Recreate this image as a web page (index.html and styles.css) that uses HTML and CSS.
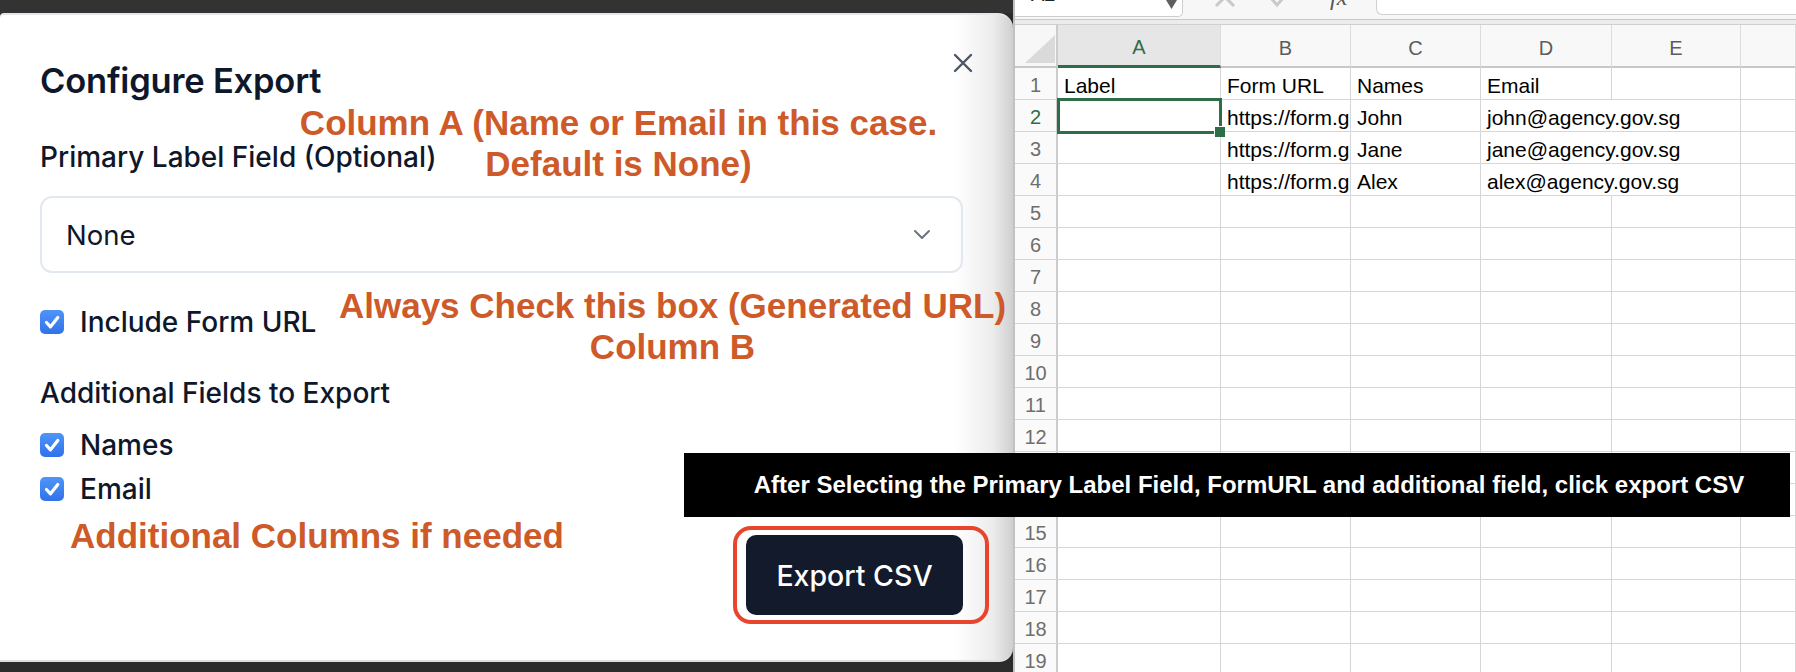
FILE: index.html
```html
<!DOCTYPE html>
<html lang="en">
<head>
<meta charset="utf-8">
<title>Configure Export</title>
<link rel="stylesheet" href="styles.css">
</head>
<body>
<div class="screen">
  <div class="left">
    <div class="modal">
      <button class="close" aria-label="Close">
        <svg width="20" height="20" viewBox="0 0 20 20"><path d="M2 2L18 18M18 2L2 18" stroke="#4b5563" stroke-width="2.4" stroke-linecap="round" fill="none"/></svg>
      </button>
      <h2 class="title">Configure Export</h2>
      <div class="field-label">Primary Label Field (Optional)</div>
      <div class="select">
        <span>None</span>
        <svg width="18" height="11" viewBox="0 0 18 11"><path d="M2 2L9 9L16 2" stroke="#6b7280" stroke-width="2" stroke-linecap="round" stroke-linejoin="round" fill="none"/></svg>
      </div>
      <label class="check check-url"><span class="cb"><svg width="24" height="24" viewBox="0 0 24 24"><path d="M6.5 12.5L10.5 16.8L17.8 7.5" stroke="#fff" stroke-width="3.2" stroke-linecap="round" stroke-linejoin="round" fill="none"/></svg></span>Include Form URL</label>
      <div class="section-label">Additional Fields to Export</div>
      <label class="check check-names"><span class="cb"><svg width="24" height="24" viewBox="0 0 24 24"><path d="M6.5 12.5L10.5 16.8L17.8 7.5" stroke="#fff" stroke-width="3.2" stroke-linecap="round" stroke-linejoin="round" fill="none"/></svg></span>Names</label>
      <label class="check check-email"><span class="cb"><svg width="24" height="24" viewBox="0 0 24 24"><path d="M6.5 12.5L10.5 16.8L17.8 7.5" stroke="#fff" stroke-width="3.2" stroke-linecap="round" stroke-linejoin="round" fill="none"/></svg></span>Email</label>
      <div class="footer"><button class="export">Export CSV</button></div>
    </div>
  </div>

  <div class="sheet">
    <div class="fbar">
      <div class="namebox"><span class="ref">A2</span>
        <svg class="tri" width="11" height="9" viewBox="0 0 11 9"><path d="M0 0H11L5.5 9Z" fill="#5f5f5f"/></svg>
      </div>
      <div class="fx-icons">
        <svg class="ic-x" width="24" height="20" viewBox="0 0 24 20"><path d="M3 1L21 19M21 1L3 19" stroke="#c9c9c9" stroke-width="3" fill="none"/></svg>
        <svg class="ic-ok" width="25" height="20" viewBox="0 0 25 20"><path d="M2 10L9 18L23 2" stroke="#c9c9c9" stroke-width="3" fill="none"/></svg>
        <span class="fx">fx</span>
      </div>
      <div class="finput"></div>
    </div>
    <div class="band"></div>
    <div class="grid">
      <div class="corner"><svg width="30" height="28" viewBox="0 0 30 28"><path d="M30 0V28H0Z" fill="#dadada"/></svg></div>
      <div class="hd hd-sel">A</div><div class="hd">B</div><div class="hd">C</div><div class="hd">D</div><div class="hd">E</div><div class="hd"></div>

      <div class="rn">1</div><div class="c">Label</div><div class="c">Form URL</div><div class="c">Names</div><div class="c">Email</div><div class="c"></div><div class="c"></div>
      <div class="rn rn-sel">2</div><div class="c c-sel"></div><div class="c">https://form.gov.sg/6a1b2c</div><div class="c">John</div><div class="c ov">john@agency.gov.sg</div><div class="c"></div><div class="c"></div>
      <div class="rn">3</div><div class="c"></div><div class="c">https://form.gov.sg/6a1b2d</div><div class="c">Jane</div><div class="c ov">jane@agency.gov.sg</div><div class="c"></div><div class="c"></div>
      <div class="rn">4</div><div class="c"></div><div class="c">https://form.gov.sg/6a1b2e</div><div class="c">Alex</div><div class="c ov">alex@agency.gov.sg</div><div class="c"></div><div class="c"></div>
      <div class="rn">5</div><div class="c"></div><div class="c"></div><div class="c"></div><div class="c"></div><div class="c"></div><div class="c"></div>
      <div class="rn">6</div><div class="c"></div><div class="c"></div><div class="c"></div><div class="c"></div><div class="c"></div><div class="c"></div>
      <div class="rn">7</div><div class="c"></div><div class="c"></div><div class="c"></div><div class="c"></div><div class="c"></div><div class="c"></div>
      <div class="rn">8</div><div class="c"></div><div class="c"></div><div class="c"></div><div class="c"></div><div class="c"></div><div class="c"></div>
      <div class="rn">9</div><div class="c"></div><div class="c"></div><div class="c"></div><div class="c"></div><div class="c"></div><div class="c"></div>
      <div class="rn">10</div><div class="c"></div><div class="c"></div><div class="c"></div><div class="c"></div><div class="c"></div><div class="c"></div>
      <div class="rn">11</div><div class="c"></div><div class="c"></div><div class="c"></div><div class="c"></div><div class="c"></div><div class="c"></div>
      <div class="rn">12</div><div class="c"></div><div class="c"></div><div class="c"></div><div class="c"></div><div class="c"></div><div class="c"></div>
      <div class="rn">13</div><div class="c"></div><div class="c"></div><div class="c"></div><div class="c"></div><div class="c"></div><div class="c"></div>
      <div class="rn">14</div><div class="c"></div><div class="c"></div><div class="c"></div><div class="c"></div><div class="c"></div><div class="c"></div>
      <div class="rn">15</div><div class="c"></div><div class="c"></div><div class="c"></div><div class="c"></div><div class="c"></div><div class="c"></div>
      <div class="rn">16</div><div class="c"></div><div class="c"></div><div class="c"></div><div class="c"></div><div class="c"></div><div class="c"></div>
      <div class="rn">17</div><div class="c"></div><div class="c"></div><div class="c"></div><div class="c"></div><div class="c"></div><div class="c"></div>
      <div class="rn">18</div><div class="c"></div><div class="c"></div><div class="c"></div><div class="c"></div><div class="c"></div><div class="c"></div>
      <div class="rn">19</div><div class="c"></div><div class="c"></div><div class="c"></div><div class="c"></div><div class="c"></div><div class="c"></div>
    </div>
  </div>

  <div class="note note-a">Column A (Name or Email in this case.<br>Default is None)</div>
  <div class="note note-b">Always Check this box (Generated URL)<br>Column B</div>
  <div class="note note-c">Additional Columns if needed</div>
  <div class="ring"></div>
  <div class="banner">After Selecting the Primary Label Field, FormURL and additional field, click export CSV</div>
</div>
</body>
</html>
```
FILE: styles.css
```css
* { box-sizing: border-box; }
html, body { margin: 0; padding: 0; }
body {
  width: 1796px;
  height: 672px;
  overflow: hidden;
  background: #2b2b2b;
  font-family: Inter, "Noto Sans", sans-serif;
}
.screen {
  position: relative;
  display: flex;
  width: 1796px;
  height: 672px;
  overflow: hidden;
}

/* ---------- modal ---------- */
.left {
  width: 1013px;
  flex: none;
  display: flex;
  flex-direction: column;
  padding: 13px 0 10px;
  background: linear-gradient(#333333 0, #333333 13px, #2b2b2b 13px);
}
.modal {
  flex: 1;
  position: relative;
  display: flex;
  flex-direction: column;
  padding: 46px 50px 0 40px;
  border-top: 2px solid #e3e6ea;
  border-bottom: 2px solid #dcdfe3;
  border-radius: 4px 15px 14px 0;
  background: linear-gradient(90deg, #ffffff 0, #ffffff 955px, #ececec 993px, #cfcfcf 1013px);
  color: #0f172a;
}
.close {
  position: absolute;
  top: 38px;
  right: 40px;
  width: 20px;
  height: 20px;
  padding: 0;
  border: 0;
  background: transparent;
  display: flex;
}
.title {
  margin: 0;
  font-size: 34.5px;
  line-height: 40px;
  font-weight: 600;
  letter-spacing: -0.2px;
}
.field-label,
.section-label {
  font-size: 28px;
  line-height: 36px;
  font-weight: 500;
}
.field-label { margin-top: 38px; }
.select {
  margin-top: 21px;
  height: 77px;
  border: 2px solid #e2e8f0;
  border-radius: 12px;
  padding: 0 30px 0 24px;
  display: flex;
  align-items: center;
  justify-content: space-between;
  font-size: 27.5px;
  font-weight: 400;
}
.check {
  height: 36px;
  display: flex;
  align-items: center;
  gap: 16px;
  font-size: 28px;
  line-height: 36px;
  font-weight: 500;
}
.check-url { margin-top: 31px; }
.section-label { margin-top: 35px; }
.check-names { margin-top: 16px; }
.check-email { margin-top: 8px; }
.cb {
  width: 24px;
  height: 24px;
  flex: none;
  border-radius: 5px;
  background: linear-gradient(#4f95f8, #2f72ea);
  display: flex;
}
.footer {
  margin-top: 28px;
  display: flex;
  justify-content: flex-end;
}
.export {
  width: 217px;
  height: 80px;
  border: 0;
  border-radius: 10px;
  background: #131a2b;
  color: #ffffff;
  font-family: Inter, "Noto Sans", sans-serif;
  font-size: 28.5px;
  font-weight: 500;
}

/* ---------- spreadsheet ---------- */
.sheet {
  flex: 1;
  min-width: 0;
  border-left: 2px solid #c2c2c2;
  background: #ffffff;
  overflow: hidden;
  display: flex;
  flex-direction: column;
  font-family: "Liberation Sans", Arial, sans-serif;
}
.fbar {
  flex: none;
  height: 46px;
  margin-top: -26px;
  display: flex;
  align-items: center;
  background: #f7f7f7;
  border-bottom: 1px solid #c9c9c9;
}
.namebox {
  align-self: flex-end;
  margin-bottom: 2px;
  width: 168px;
  height: 34px;
  background: #ffffff;
  border: 1px solid #cdcdcd;
  border-top: 0;
  border-left: 0;
  border-radius: 0 0 5px 0;
  display: flex;
  justify-content: space-between;
  align-items: flex-start;
  padding: 1px 5px 0 16px;
}
.ref {
  font-size: 20px;
  line-height: 20px;
  color: #222;
}
.tri { margin-top: 16px; }
.fx-icons {
  width: 193px;
  flex: none;
  display: flex;
  align-items: center;
  padding-left: 30px;
}
.ic-ok { margin-left: 31px; }
.fx {
  margin-left: 37px;
  font-family: "Liberation Serif", serif;
  font-style: italic;
  font-size: 24px;
  line-height: 20px;
  color: #555;
}
.finput {
  flex: 1;
  align-self: flex-end;
  height: 40px;
  margin-bottom: 4px;
  background: #ffffff;
  border: 1px solid #d0d0d0;
  border-right: 0;
  border-radius: 0 0 0 6px;
}
.band {
  flex: none;
  height: 5px;
  background: #ececec;
  border-bottom: 1px solid #d0d0d0;
}
.grid {
  flex: none;
  display: grid;
  grid-template-columns: 43px 163px 130px 130px 131px 129px 1fr;
  grid-template-rows: 43px;
  grid-auto-rows: 32px;
}
.corner {
  background: #f7f7f7;
  border-right: 2px solid #cccccc;
  border-bottom: 2px solid #c8c8c8;
  display: flex;
  align-items: flex-end;
  justify-content: flex-end;
  padding: 0 1px 3px 0;
}
.hd {
  background: #f8f8f8;
  border-right: 1px solid #dcdcdc;
  border-bottom: 2px solid #c8c8c8;
  display: flex;
  align-items: center;
  justify-content: center;
  padding-top: 5px;
  font-size: 20px;
  color: #5c5c5c;
}
.hd-sel {
  background: #e6e6e6;
  color: #2e6d45;
  border-bottom: 3px solid #2e6d45;
}
.rn {
  background: #fafafa;
  border-right: 2px solid #cccccc;
  border-bottom: 1px solid #d6d6d6;
  display: flex;
  align-items: flex-end;
  justify-content: center;
  padding-bottom: 2px;
  font-size: 20px;
  line-height: 24px;
  color: #6e6e6e;
}
.rn-sel { color: #2e6d45; }
.c {
  position: relative;
  border-right: 1px solid #d6d6d6;
  border-bottom: 1px solid #d6d6d6;
  display: flex;
  align-items: flex-end;
  padding: 0 0 1px 6px;
  font-size: 21px;
  line-height: 24px;
  color: #000;
  white-space: nowrap;
  overflow: hidden;
}
.c.ov {
  overflow: visible;
  border-right-color: transparent;
}
.c-sel { overflow: visible; }
.c-sel::after {
  content: "";
  position: absolute;
  left: -1px;
  top: -2px;
  right: -2px;
  bottom: -3px;
  border: 3px solid #2e6d45;
}
.c-sel::before {
  content: "";
  position: absolute;
  left: 157px;
  top: 27px;
  width: 10px;
  height: 10px;
  background: #2e6d45;
  box-shadow: -1px -1px 0 #ffffff;
  z-index: 2;
}

/* ---------- annotations ---------- */
.note {
  position: absolute;
  font-family: "Liberation Sans", Arial, sans-serif;
  font-weight: 700;
  font-size: 35px;
  line-height: 41px;
  color: #cd5a28;
  text-align: center;
  white-space: nowrap;
}
.note-a { left: 218px; top: 102px; width: 801px; }
.note-b { left: 272px; top: 285px; width: 801px; }
.note-c { left: 70px; top: 515px; text-align: left; }
.ring {
  position: absolute;
  left: 733px;
  top: 526px;
  width: 256px;
  height: 98px;
  border: 4px solid #e8452c;
  border-radius: 18px;
}
.banner {
  position: absolute;
  left: 684px;
  top: 453px;
  width: 1106px;
  height: 64px;
  background: #000000;
  color: #ffffff;
  font-family: "Liberation Sans", Arial, sans-serif;
  font-weight: 700;
  font-size: 24px;
  display: flex;
  align-items: center;
  justify-content: center;
  padding-left: 24px;
  white-space: nowrap;
}
```
